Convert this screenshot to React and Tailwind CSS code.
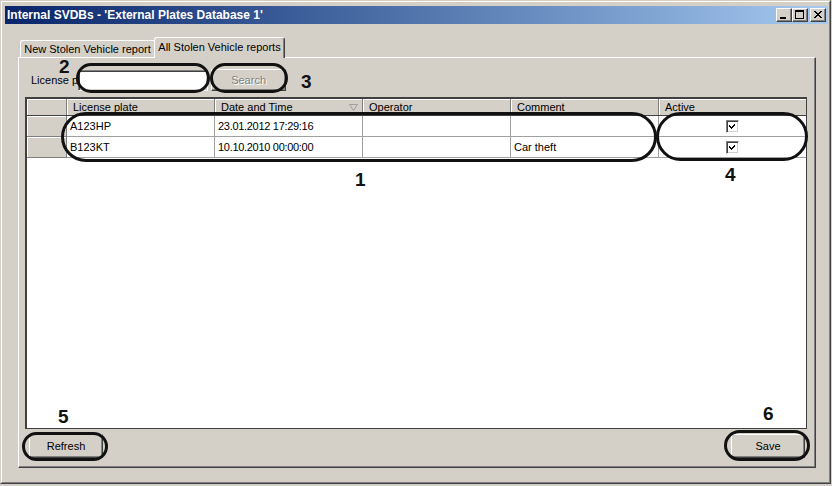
import React from "react";

function TitleBtn({ kind, extra = "" }) {
  return (
    <div
      className={`w-[16px] h-[14px] bg-[#d4d0c8] border border-t-white border-l-white border-r-[#404040] border-b-[#404040] shadow-[inset_-1px_-1px_0_#808080] ${extra}`}
    >
      <svg width="14" height="12" viewBox="0 0 14 12" className="block" shapeRendering="crispEdges">
        {kind === "min" && <rect x="3" y="8" width="6" height="2" fill="#000" />}
        {kind === "max" && (
          <g fill="#000">
            <rect x="2" y="1" width="9" height="2" />
            <rect x="2" y="1" width="1" height="9" />
            <rect x="10" y="1" width="1" height="9" />
            <rect x="2" y="9" width="9" height="1" />
          </g>
        )}
        {kind === "close" && (
          <g fill="#000">
            <polygon points="3,2 5,2 7,4.5 9,2 11,2 8,5.5 11,9 9,9 7,6.5 5,9 3,9 6,5.5" />
          </g>
        )}
      </svg>
    </div>
  );
}

function CheckBox() {
  return (
    <div className="w-[13px] h-[13px] bg-white border border-t-[#808080] border-l-[#808080] border-r-white border-b-white shadow-[inset_1px_1px_0_#404040,inset_-1px_-1px_0_#d4d0c8]">
      <svg width="11" height="11" viewBox="0 0 11 11" className="block" shapeRendering="crispEdges">
        <polygon points="2,4 4,6 8,2 8,4 4,8 2,6" fill="#000" />
      </svg>
    </div>
  );
}

function Ellipse({ cls }) {
  return <div className={`absolute border-[3px] border-[#111] rounded-full ${cls}`} />;
}

function Num({ cls, children }) {
  return (
    <div className={`absolute text-[19px] leading-[19px] font-bold text-[#111] ${cls}`}>{children}</div>
  );
}

export default function App() {
  const rows = [
    { plate: "A123HP", date: "23.01.2012 17:29:16", op: "", comment: "" },
    { plate: "B123KT", date: "10.10.2010 00:00:00", op: "", comment: "Car theft" },
  ];
  const raised =
    "border border-t-white border-l-white border-r-[#404040] border-b-[#404040] shadow-[inset_-1px_-1px_0_#808080]";
  const headCell =
    "h-full border-r border-[#808080] shadow-[inset_1px_1px_0_#fff] flex items-center";
  return (
    <div className="relative w-[832px] h-[486px] bg-[#d4d0c8] overflow-hidden font-['Liberation_Sans',Arial,sans-serif] text-[11px] text-black leading-none">
      <div className="w-[831px] h-[484px] border border-t-[#d4d0c8] border-l-[#d4d0c8] border-r-[#404040] border-b-[#404040]">
        <div className="h-full border border-t-white border-l-white border-r-[#808080] border-b-[#808080] pl-[3px] pr-[1px] pt-[4px] flex flex-col">
          {/* Title bar */}
          <div className="h-[18px] flex items-center justify-between bg-linear-to-r from-[#0a246a] to-[#a6caf0] pl-[2px] pr-[2px]">
            <span className="text-white font-bold text-[12px] whitespace-nowrap">
              Internal SVDBs - 'External Plates Database 1'
            </span>
            <div className="flex items-center">
              <TitleBtn kind="min" />
              <TitleBtn kind="max" />
              <TitleBtn kind="close" extra="ml-[2px]" />
            </div>
          </div>

          {/* Body */}
          <div className="pl-[13px] pr-[12px] pt-[13px]">
            {/* Tabs */}
            <div className="h-[20px] flex items-end pl-[2px] relative z-10">
              <div className="w-[134px] h-[17px] bg-[#d4d0c8] border-t border-l border-white rounded-tl-[3px] flex items-center justify-center whitespace-nowrap">
                New Stolen Vehicle report
              </div>
              <div className="w-[131px] h-[21px] -mb-px bg-[#d4d0c8] border-t border-l border-r border-t-white border-l-white border-r-[#404040] rounded-t-[3px] shadow-[inset_-1px_0_0_#808080] flex items-center justify-center pb-[2px] whitespace-nowrap">
                All Stolen Vehicle reports
              </div>
            </div>

            {/* Panel */}
            <div className={`h-[411px] flex flex-col ${raised}`}>
              {/* Search row */}
              <div className="mt-[11px] ml-[12px] h-[22px] flex items-center">
                <span className="whitespace-nowrap">License p</span>
                <div className="ml-[0px] w-[130px] h-[21px] bg-white border border-t-[#808080] border-l-[#808080] border-r-white border-b-white shadow-[inset_1px_1px_0_#404040,inset_-1px_-1px_0_#d4d0c8]" />
                <div className={`ml-[3px] w-[75px] h-[22px] flex items-center justify-center text-[#808080] [text-shadow:1px_1px_0_#fff] ${raised}`}>
                  Search
                </div>
              </div>

              {/* Grid */}
              <div className="mt-[6px] ml-[6px] w-[782px] h-[332px] bg-white border-t-2 border-l-2 border-r border-b border-[#404040] overflow-hidden">
                {/* header */}
                <div className="flex h-[17px] bg-[#d4d0c8] border-b border-[#404040]">
                  <div className={`w-[40px] ${headCell}`} />
                  <div className={`w-[148px] pl-[6px] ${headCell}`}>License plate</div>
                  <div className={`w-[148px] pl-[6px] pr-[4px] justify-between ${headCell}`}>
                    <span>Date and Time</span>
                    <svg width="9" height="7" viewBox="0 0 9 7" className="block">
                      <polygon points="0.5,0.5 8.5,0.5 4.5,6.5" fill="none" stroke="#a0a0a0" strokeWidth="1" />
                    </svg>
                  </div>
                  <div className={`w-[148px] pl-[6px] ${headCell}`}>Operator</div>
                  <div className={`w-[148px] pl-[6px] ${headCell}`}>Comment</div>
                  <div className="w-[147px] h-full pl-[6px] shadow-[inset_1px_1px_0_#fff] flex items-center">Active</div>
                </div>
                {/* rows */}
                {rows.map((r) => (
                  <div key={r.plate} className="flex h-[21px]">
                    <div className="w-[40px] h-full bg-[#d4d0c8] border-r border-b border-[#808080] shadow-[inset_1px_1px_0_#fff]" />
                    <div className="w-[148px] h-full border-r border-b border-[#a0a0a0] pl-[3px] flex items-center">{r.plate}</div>
                    <div className="w-[148px] h-full border-r border-b border-[#a0a0a0] pl-[3px] flex items-center tracking-[-0.3px]">{r.date}</div>
                    <div className="w-[148px] h-full border-r border-b border-[#a0a0a0] pl-[3px] flex items-center">{r.op}</div>
                    <div className="w-[148px] h-full border-r border-b border-[#a0a0a0] pl-[3px] flex items-center">{r.comment}</div>
                    <div className="w-[147px] h-full border-b border-[#a0a0a0] flex items-center justify-center">
                      <CheckBox />
                    </div>
                  </div>
                ))}
              </div>

              {/* Buttons */}
              <div className="mt-[5px] px-[10px] flex justify-between">
                <div className={`w-[74px] h-[24px] flex items-center justify-center ${raised}`}>Refresh</div>
                <div className={`w-[74px] h-[24px] flex items-center justify-center ${raised}`}>Save</div>
              </div>
            </div>
          </div>
        </div>
      </div>

      {/* Annotations */}
      <Ellipse cls="left-[61px] top-[112px] w-[596px] h-[50px]" />
      <Ellipse cls="left-[656px] top-[112px] w-[152px] h-[49px]" />
      <Ellipse cls="left-[76px] top-[63px] w-[134px] h-[30px]" />
      <Ellipse cls="left-[210px] top-[63px] w-[78px] h-[30px]" />
      <Ellipse cls="left-[22px] top-[432px] w-[86px] h-[29px]" />
      <Ellipse cls="left-[724px] top-[430px] w-[86px] h-[31px]" />
      <Num cls="left-[59px] top-[57px]">2</Num>
      <Num cls="left-[301px] top-[72px]">3</Num>
      <Num cls="left-[355px] top-[170px]">1</Num>
      <Num cls="left-[725px] top-[165px]">4</Num>
      <Num cls="left-[58px] top-[407px]">5</Num>
      <Num cls="left-[763px] top-[404px]">6</Num>
    </div>
  );
}
